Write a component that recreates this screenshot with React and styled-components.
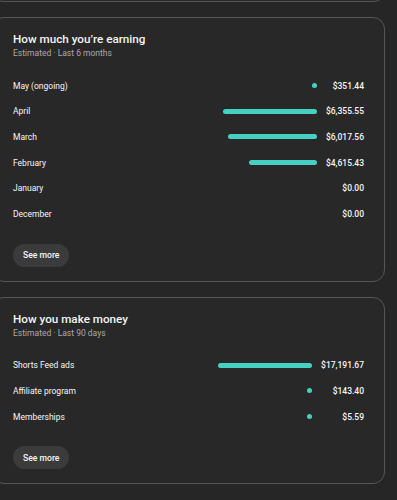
import React from "react";
import styled, { createGlobalStyle } from "styled-components";

const Global = createGlobalStyle`
  html, body { margin: 0; padding: 0; background: #262626; }
  body { font-family: Roboto, "Noto Sans", Arial, sans-serif; color: #f1f1f1; overflow: hidden; }
`;

const Page = styled.div`
  width: 397px;
  height: 500px;
  overflow: hidden;
`;

const Stack = styled.div`
  display: flex;
  flex-direction: column;
  gap: 15px;
  margin: -20px 0 0 -8px;
  width: 393px;
`;

const Card = styled.section`
  box-sizing: border-box;
  background: #282828;
  border: 1px solid #565656;
  border-radius: 12px;
  padding: 14px 20px 14px 20px;
  display: flex;
  flex-direction: column;
`;

const StubCard = styled(Card)`
  height: 22px;
  padding: 0;
`;

const Title = styled.h2`
  margin: 0;
  font-size: 11.7px;
  line-height: 15px;
  font-weight: 500;
  color: #f4f4f4;
`;

const Subtitle = styled.div`
  font-size: 8.5px;
  line-height: 13px;
  color: #aaaaaa;
`;

const Rows = styled.div`
  display: grid;
  grid-template-columns: 1fr auto auto;
  grid-auto-rows: 25.6px;
  align-items: center;
  column-gap: 9px;
  margin-top: 13px;
`;

const Label = styled.div`
  font-size: 8.5px;
  font-weight: 400;
  color: #f6f6f6;
`;

const BarCell = styled.div`
  display: flex;
  justify-content: flex-end;
  width: 94px;
`;

const Bar = styled.div`
  height: 5px;
  border-radius: 3px;
  background: #44d1c2;
`;

const Value = styled.div`
  font-size: 8.5px;
  font-weight: 500;
  color: #f6f6f6;
  text-align: right;
`;

const Button = styled.button`
  align-self: flex-start;
  margin-top: 17px;
  height: 23px;
  padding: 0 10px;
  border: none;
  border-radius: 12px;
  background: #3b3b3b;
  color: #f6f6f6;
  font-family: inherit;
  font-size: 8.6px;
  font-weight: 500;
  cursor: pointer;
`;

const MAXBAR = 94;

function Chart({ title, subtitle, rows }) {
  const max = Math.max(...rows.map((r) => r.v));
  return (
    <Card>
      <Title>{title}</Title>
      <Subtitle>{subtitle}</Subtitle>
      <Rows>
        {rows.map((r) => (
          <React.Fragment key={r.label}>
            <Label>{r.label}</Label>
            <BarCell>
              {r.v > 0 && (
                <Bar style={{ width: Math.max(5, Math.round((r.v / max) * MAXBAR)) }} />
              )}
            </BarCell>
            <Value>{r.text}</Value>
          </React.Fragment>
        ))}
      </Rows>
      <Button>See more</Button>
    </Card>
  );
}

const earning = [
  { label: "May (ongoing)", v: 351.44, text: "$351.44" },
  { label: "April", v: 6355.55, text: "$6,355.55" },
  { label: "March", v: 6017.56, text: "$6,017.56" },
  { label: "February", v: 4615.43, text: "$4,615.43" },
  { label: "January", v: 0, text: "$0.00" },
  { label: "December", v: 0, text: "$0.00" },
];

const money = [
  { label: "Shorts Feed ads", v: 17191.67, text: "$17,191.67" },
  { label: "Affiliate program", v: 143.4, text: "$143.40" },
  { label: "Memberships", v: 5.59, text: "$5.59" },
];

export default function App() {
  return (
    <Page>
      <Global />
      <Stack>
        <StubCard />
        <Chart title="How much you’re earning" subtitle="Estimated · Last 6 months" rows={earning} />
        <Chart title="How you make money" subtitle="Estimated · Last 90 days" rows={money} />
      </Stack>
    </Page>
  );
}
